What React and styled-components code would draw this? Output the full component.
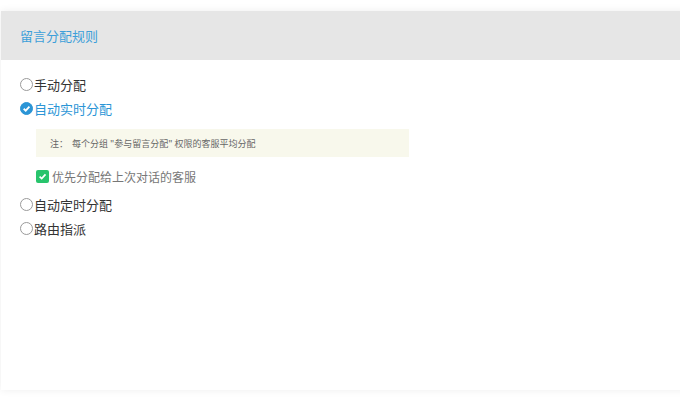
import React, { useState } from "react";
import styled, { createGlobalStyle } from "styled-components";

const GlobalStyle = createGlobalStyle`
  html, body {
    margin: 0;
    padding: 0;
    background: #fff;
    font-family: "Microsoft YaHei", "Noto Sans CJK SC", "Liberation Sans", sans-serif;
  }
`;

const Page = styled.div`
  padding: 11px 0 10px 1px;
  overflow: hidden;
`;

const Panel = styled.div`
  height: 379px;
  margin-right: -10px;
  background: #fff;
  box-shadow: 0 0 8px rgba(0, 0, 0, 0.07);
  display: flex;
  flex-direction: column;
`;

const Header = styled.div`
  height: 49px;
  background: #e6e6e6;
  display: flex;
  align-items: center;
  padding-left: 19px;
  font-size: 13px;
  color: #3d9fd9;
`;

const Body = styled.div`
  padding: 12px 19px;
  display: flex;
  flex-direction: column;
`;

const Option = styled.label`
  display: flex;
  align-items: center;
  height: 24px;
  font-size: 13px;
  color: ${(p) => (p.$active ? "#2b95d6" : "#333")};
  cursor: pointer;
`;

const Radio = styled.span`
  width: 13px;
  height: 13px;
  border-radius: 50%;
  box-sizing: border-box;
  border: 1px solid #9a9a9a;
  margin-right: 1px;
  display: inline-flex;
  align-items: center;
  justify-content: center;
  background: ${(p) => (p.$checked ? "#2b95d6" : "#fff")};
  border-color: ${(p) => (p.$checked ? "#2b95d6" : "#9a9a9a")};
`;

const Sub = styled.div`
  padding: 9px 0 9px 16px;
  display: flex;
  flex-direction: column;
`;

const Note = styled.div`
  width: 373px;
  height: 28px;
  box-sizing: border-box;
  background: #f8f8ec;
  display: flex;
  align-items: center;
  padding-left: 14px;
  font-size: 9px;
  color: #666;
  white-space: pre;
`;

const CheckRow = styled.label`
  display: flex;
  align-items: center;
  margin-top: 13px;
  height: 13px;
  font-size: 12px;
  color: #777;
`;

const CheckBox = styled.span`
  width: 13px;
  height: 13px;
  border-radius: 2px;
  background: #28c46c;
  display: inline-flex;
  align-items: center;
  justify-content: center;
  margin-right: 3px;
`;

const options = ["手动分配", "自动实时分配", "自动定时分配", "路由指派"];

export default function App() {
  const [sel, setSel] = useState(1);
  return (
    <>
      <GlobalStyle />
      <Page>
        <Panel>
          <Header>留言分配规则</Header>
          <Body>
            {options.map((o, i) => (
              <React.Fragment key={o}>
                <Option $active={sel === i} onClick={() => setSel(i)}>
                  <Radio $checked={sel === i}>
                    {sel === i && (
                      <svg width="9" height="9" viewBox="0 0 8 8">
                        <path d="M1.5 4.2 L3.3 5.9 L6.6 2.3" stroke="#fff" strokeWidth="1.6" fill="none" />
                      </svg>
                    )}
                  </Radio>
                  {o}
                </Option>
                {i === 1 && sel === 1 && (
                  <Sub>
                    <Note>{'注：  每个分组 "参与留言分配" 权限的客服平均分配'}</Note>
                    <CheckRow>
                      <CheckBox>
                        <svg width="9" height="9" viewBox="0 0 9 9">
                          <path d="M1.6 4.6 L3.7 6.6 L7.5 2.4" stroke="#fff" strokeWidth="1.7" fill="none" />
                        </svg>
                      </CheckBox>
                      优先分配给上次对话的客服
                    </CheckRow>
                  </Sub>
                )}
              </React.Fragment>
            ))}
          </Body>
        </Panel>
      </Page>
    </>
  );
}
